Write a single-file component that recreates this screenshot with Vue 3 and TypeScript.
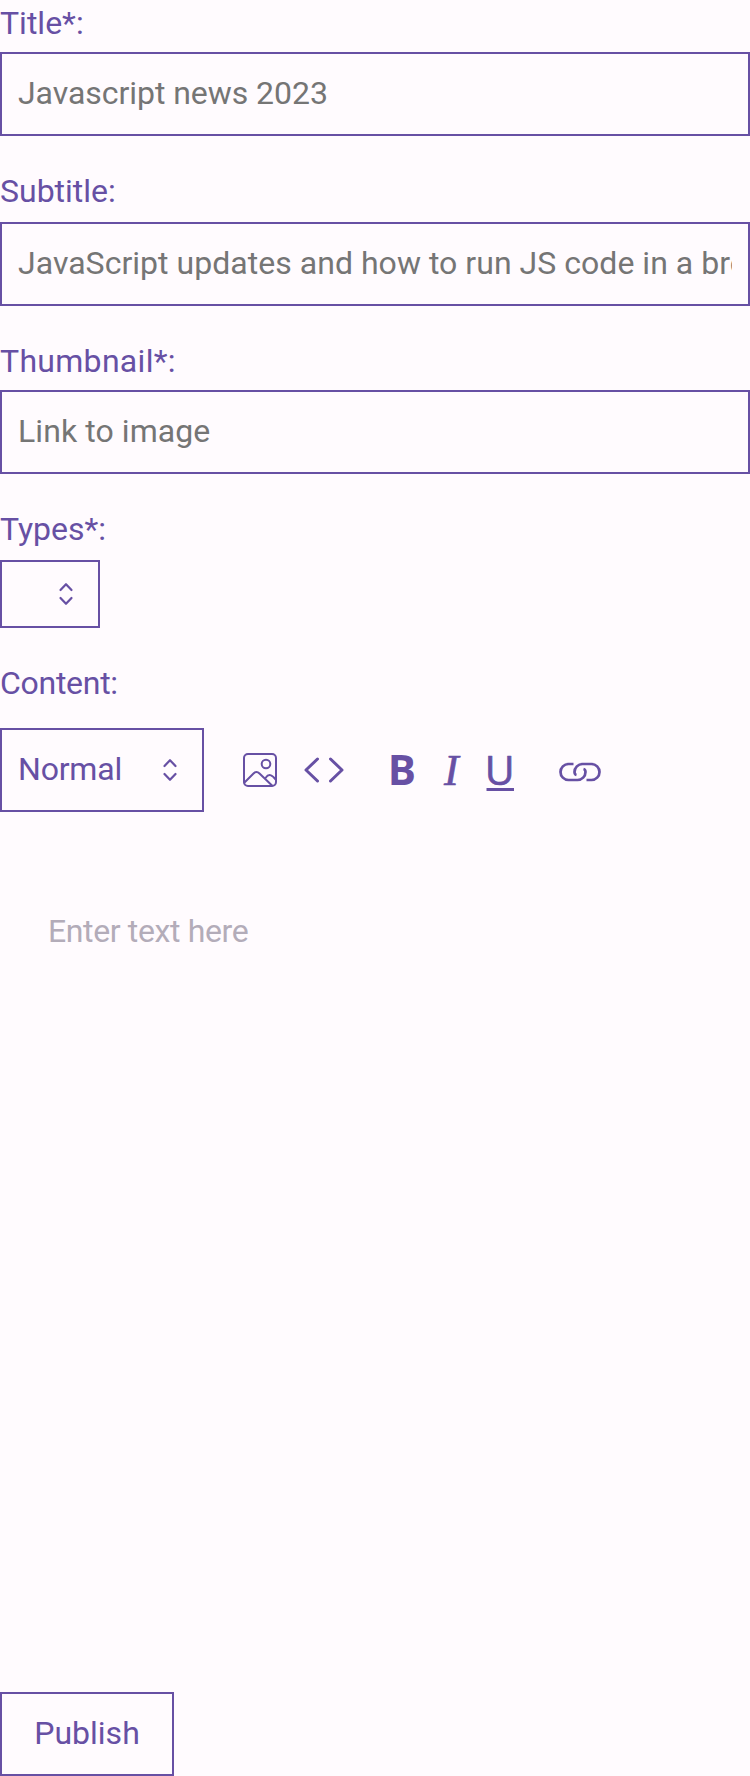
<script setup lang="ts">
interface Field {
  id: string
  label: string
  placeholder: string
  roomy?: boolean
}

const fields: Field[] = [
  { id: 'title', label: 'Title*:', placeholder: 'Javascript news 2023' },
  { id: 'subtitle', label: 'Subtitle:', placeholder: 'JavaScript updates and how to run JS code in a browser', roomy: true },
  { id: 'thumbnail', label: 'Thumbnail*:', placeholder: 'Link to image' },
]
</script>

<template>
  <form class="editor" @submit.prevent>
    <div v-for="f in fields" :key="f.id" class="field" :class="'field-' + f.id">
      <label class="label" :class="{ roomy: f.roomy }" :for="f.id">{{ f.label }}</label>
      <input :id="f.id" class="input" type="text" :placeholder="f.placeholder" />
    </div>

    <div class="field">
      <span class="label roomy">Types*:</span>
      <button type="button" class="select types" aria-label="Types">
        <svg class="arrows" width="14" height="24" viewBox="0 0 14 24">
          <path d="M1.5 8 7 2.2 12.5 8M1.5 16 7 21.8 12.5 16" />
        </svg>
      </button>
    </div>

    <div class="field">
      <span class="label content-label">Content:</span>
      <div class="toolbar">
        <button type="button" class="select format">
          <span class="format-name">Normal</span>
          <svg class="arrows" width="14" height="24" viewBox="0 0 14 24">
            <path d="M1.5 8 7 2.2 12.5 8M1.5 16 7 21.8 12.5 16" />
          </svg>
        </button>
        <div class="tools insert">
          <svg width="34" height="34" viewBox="0 0 34 34" class="thin">
            <rect x="1" y="1" width="32" height="32" rx="4" />
            <circle cx="23" cy="11" r="4.3" />
            <path d="M1.5 29.5 10.5 20.5Q13.5 17.5 16.5 20.5L29 32.500M22.500 25Q27 18.500 32.500 26.500" />
          </svg>
          <svg width="40" height="26" viewBox="0 0 40 26">
            <path d="M13.5 2 2 13 13.5 24M26.5 2 38 13 26.5 24" stroke-width="3" />
          </svg>
        </div>
        <div class="tools marks">
          <svg width="28" height="40" viewBox="0 0 28 40"><text class="bold" x="-2.2" y="32">B</text></svg>
          <svg width="20" height="40" viewBox="0 0 20 40"><text class="italic" x="2" y="32">I</text></svg>
          <svg width="28" height="40" viewBox="0 0 28 40">
            <text class="under" x="-1.2" y="31.700">U</text>
            <path d="M.5 36.500H28" class="rule" />
          </svg>
        </div>
        <svg class="link" width="44" height="20" viewBox="-22 -10 44 20">
          <path d="M-6.500-8H-11.500a8 8 0 0 0 0 16H-2.500a8 8 0 0 0 8-8q0-2.500-2-3" />
          <path d="M6.500 8H11.500a8 8 0 0 0 0-16H2.500a8 8 0 0 0-8 8q0 2.500 2 3" />
        </svg>
      </div>
    </div>

    <div class="body">Enter text here</div>
    <button class="publish">Publish</button>
  </form>
</template>

<style>
body {
  margin: 0;
  background: #fffbfe;
}
</style>

<style scoped>
.editor,
.editor * {
  box-sizing: border-box;
}
.editor {
  display: flex;
  flex-direction: column;
  height: 1776px;
  font: 32px/46px Roboto, sans-serif;
  color: #6750a4;
  background: #fffbfe;
}
.field {
  display: flex;
  flex-direction: column;
  margin-bottom: 32px;
}
.label {
  height: 46px;
  margin-bottom: 6px;
}
.label.roomy {
  margin-bottom: 8px;
}
.label.content-label {
  margin-bottom: 22px;
  letter-spacing: -0.28px;
}
.input,
.select,
.publish {
  height: 84px;
  margin: 0;
  border: 2px solid #6750a4;
  border-radius: 0;
  background: transparent;
  font: inherit;
  color: inherit;
  outline: none;
}
.input {
  width: 100%;
  padding: 0 16px 2px;
}
.input::placeholder {
  color: #757575;
  opacity: 1;
}
.field-title .input {
  letter-spacing: -0.05px;
}
.field-subtitle .input {
  letter-spacing: 0.03px;
}
.field-thumbnail .label {
  letter-spacing: 0.3px;
}
.field-thumbnail .input {
  letter-spacing: 0.08px;
}
.select {
  display: flex;
  align-items: center;
  padding: 0 25px 0 16px;
}
.types {
  justify-content: flex-end;
  width: 100px;
  height: 68px;
}
.format {
  justify-content: space-between;
  width: 204px;
}
.format-name {
  padding-bottom: 2px;
  letter-spacing: -0.2px;
}
svg {
  display: block;
  flex: none;
  overflow: visible;
  fill: none;
  stroke: #6750a4;
  stroke-width: 2.7px;
  stroke-linecap: round;
  stroke-linejoin: round;
}
.arrows {
  stroke-width: 2.2px;
}
.thin {
  stroke-width: 2px;
}
.toolbar,
.tools {
  display: flex;
  align-items: center;
}
.toolbar {
  height: 84px;
}
.insert {
  gap: 27px;
  margin-left: 39px;
}
.marks {
  gap: 24px;
  margin-left: 46px;
}
.marks svg {
  transform: translateY(3px);
}
.marks text {
  fill: #6750a4;
  stroke: none;
}
.bold {
  font: 700 42px "Open Sans", sans-serif;
}
.marks .italic {
  font: italic 44px "Liberation Serif", serif;
  stroke: #6750a4;
  stroke-width: 0.6px;
}
.marks .under {
  font: 400 41px "Open Sans", sans-serif;
  stroke: #6750a4;
  stroke-width: 0.7px;
}
.rule {
  stroke-width: 3px;
  stroke-linecap: butt;
}
.link {
  margin: 3px 0 0 44px;
  stroke-linecap: butt;
}
.body {
  flex: 1;
  padding: 64px 48px;
  color: #b3acb9;
  letter-spacing: -0.37px;
}
.publish {
  align-self: flex-start;
  width: 174px;
  padding: 0 0 2px;
}
</style>
